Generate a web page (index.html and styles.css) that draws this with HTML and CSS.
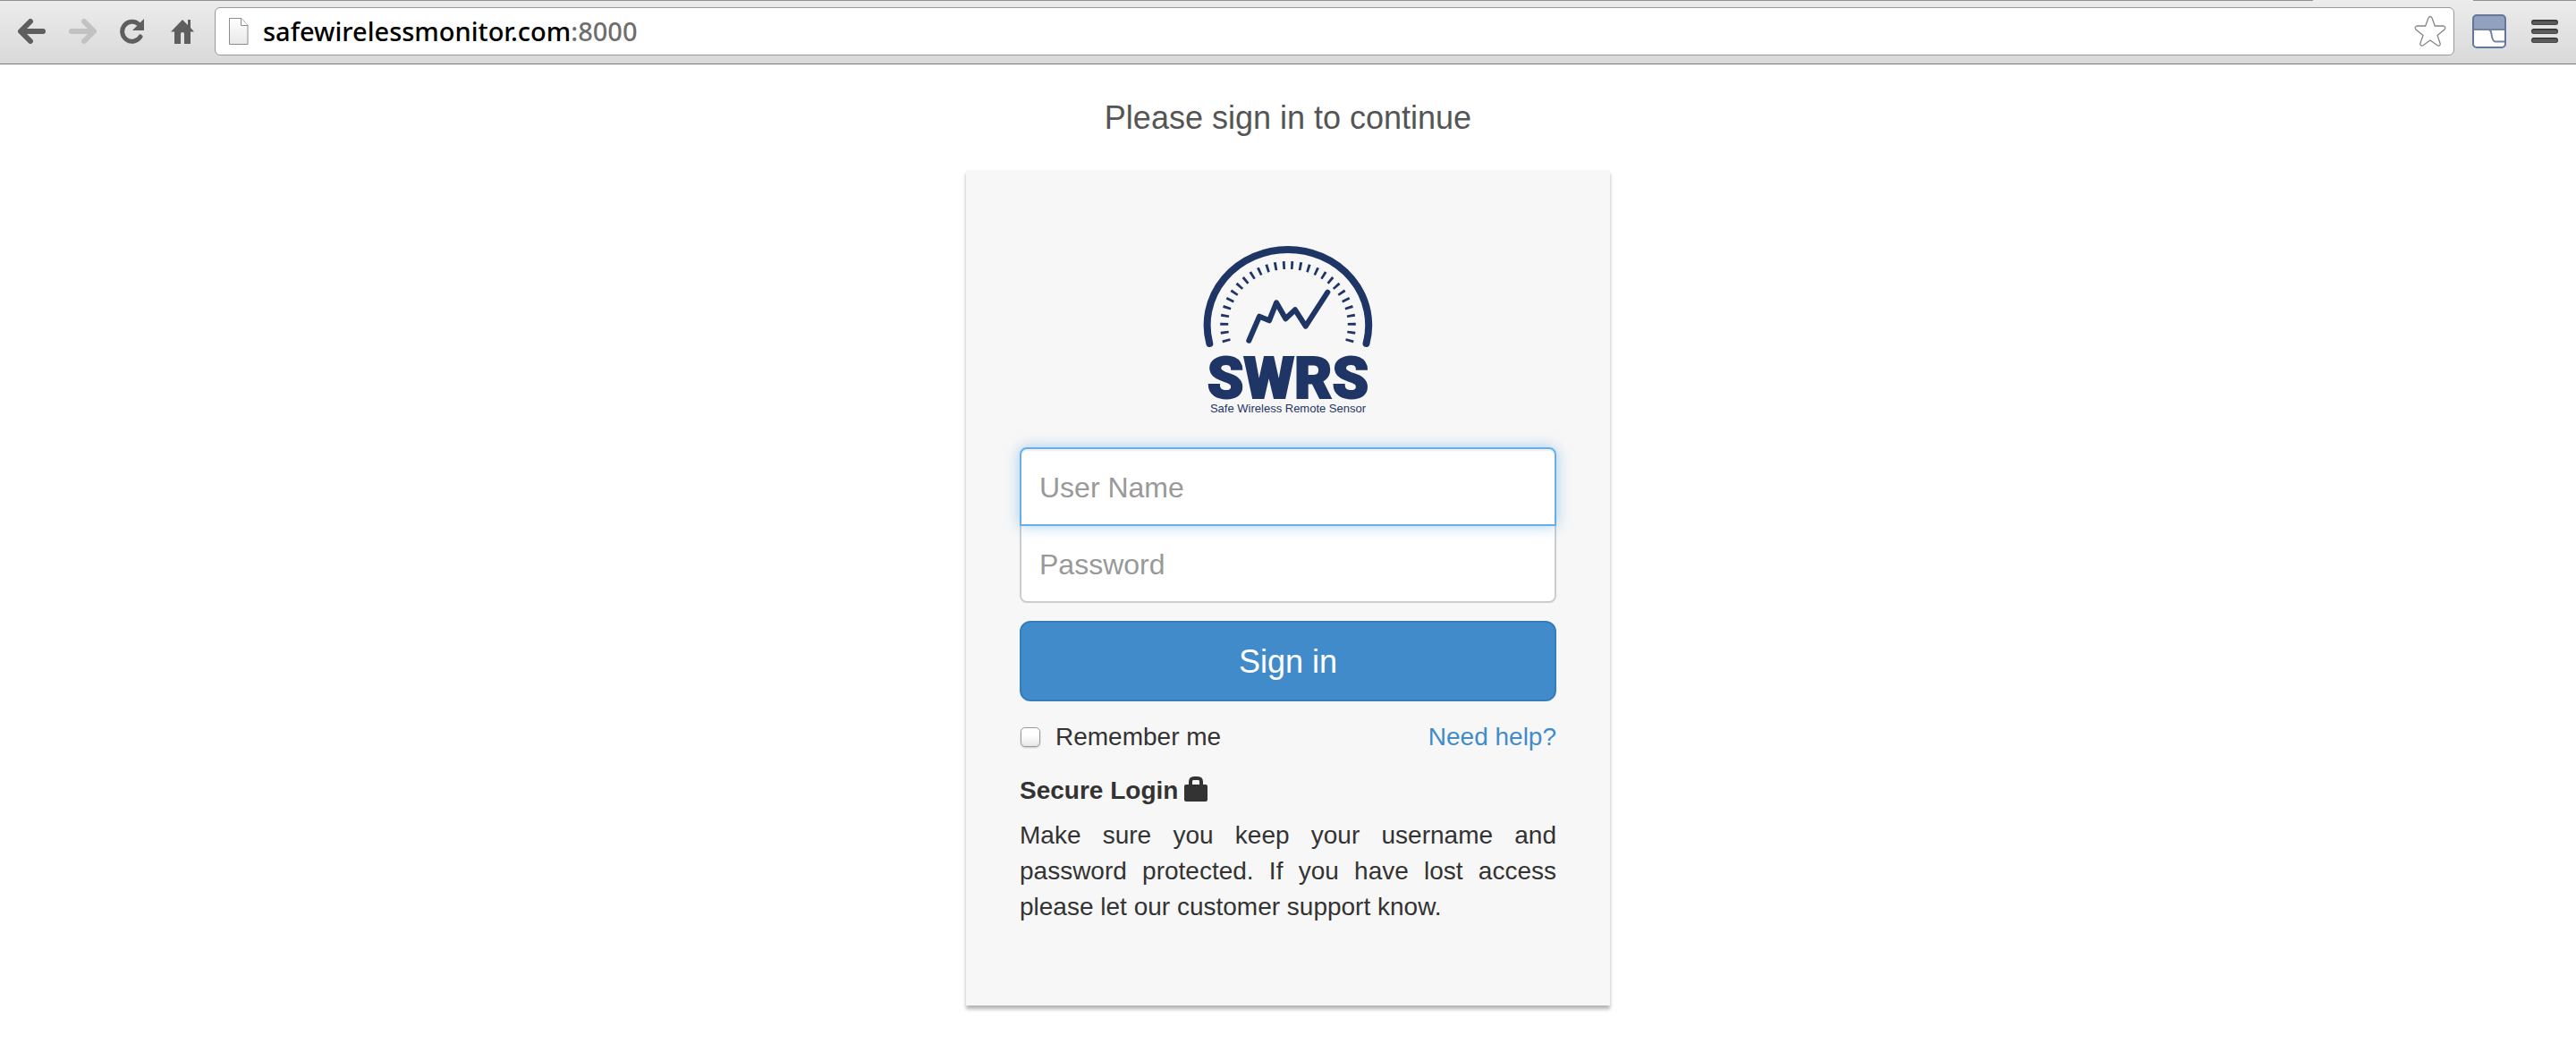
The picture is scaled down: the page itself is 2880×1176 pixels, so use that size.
FILE: index.html
```html
<!DOCTYPE html>
<html lang="en">
<head>
<meta charset="utf-8">
<title>Sign in</title>
<link rel="stylesheet" href="styles.css">
</head>
<body>
<header class="toolbar">
  <div class="tab-edge"></div>
  <nav class="nav">
    <button class="tool" type="button" aria-label="Back">
      <svg viewBox="0 0 32 28" width="32" height="28"><path d="M14 3 3 14l11 11M4 14h24" class="arrow"/></svg>
    </button>
    <button class="tool" type="button" aria-label="Forward" disabled>
      <svg viewBox="0 0 32 28" width="32" height="28"><path d="M18 3l11 11-11 11M28 14H4" class="arrow arrow-off"/></svg>
    </button>
    <button class="tool" type="button" aria-label="Reload">
      <svg viewBox="0 0 32 28" width="32" height="28"><path d="M25 20A11 11 0 1 1 23 6" class="ring"/><path d="M29 0v13H16z" class="solid"/></svg>
    </button>
    <button class="tool" type="button" aria-label="Home">
      <svg viewBox="0 0 32 28" width="32" height="28"><path d="M16 1 22 7V1h3v9l4 4.500h-4V28h-7V17q0-2-2-2t-2 2v11H7V14.500H3z" class="solid"/></svg>
    </button>
  </nav>
  <div class="omnibox">
    <svg class="page-icon" viewBox="0 0 24 32" width="24" height="32"><defs><linearGradient id="sheet" x1="0" y1="0" x2="0" y2="1"><stop offset="0" stop-color="#fff"/><stop offset="1" stop-color="#e8e8e8"/></linearGradient></defs><path d="M1.500 1.500H15l7 8V30.500H1.500z" fill="url(#sheet)" stroke="#8c8c8c"/><path d="M14.500 1.500v8H22" fill="#fff" stroke="#8c8c8c"/></svg>
    <span class="url">safewirelessmonitor.com<span class="port">:8000</span></span>
    <button class="star" type="button" aria-label="Bookmark this page">
      <svg viewBox="0 0 36 36" width="36" height="36"><path d="M16 3Q18 0 20 3L23.300 12H33Q36 13.500 34 16L26 22.500 29.300 32Q29 35 26 33.800L18 28 10 33.800Q7 35 6.700 32L10 22.500 2 16Q0 13.500 3 12h9.700z" fill="none" stroke="#858585" stroke-width="1.300"/></svg>
    </button>
  </div>
  <button class="extension" type="button" aria-label="Extension">
    <svg viewBox="0 0 38 38" width="38" height="38"><rect x="1" y="1" width="36" height="36" rx="4" fill="#fff"/><path d="M1 17V5q0-4 4-4h28q4 0 4 4v12z" fill="#93a1c0"/><path d="M1 17h36M19 17q2 1 2.500 5 1 8 4 8.500H37" fill="none" stroke="#73849f" stroke-width="2"/><rect x="1" y="1" width="36" height="36" rx="4" fill="none" stroke="#64779b" stroke-width="2"/></svg>
  </button>
  <button class="menu" type="button" aria-label="Menu">
    <svg viewBox="0 0 30 26" width="30" height="26"><path d="M3 3h24M3 13h24M3 23h24" stroke="#333" stroke-width="6" stroke-linecap="round"/><path d="M3 3.500h24M3 13.500h24M3 23.500h24" stroke="#5c5c5c" stroke-width="4" stroke-linecap="round"/></svg>
  </button>
</header>
<main class="page">
  <h1 class="title">Please sign in to continue</h1>
  <section class="card">
    <svg class="logo" viewBox="0 0 240 220" width="240" height="220" role="img" aria-label="SWRS, Safe Wireless Remote Sensor">
      <path class="gauge" d="M32.300 124A90.300 84.500 0 1 1 207.500 124"/>
      <path class="ticks" pathLength="273" d="M51.500 122A71.300 67 0 1 1 188.500 122"/>
      <path class="trend" d="M76.300 120.700 88 93.700l11 4.600 8-20 10.300 18L128 86.300l11.700 18.400 24.600-38"/>
      <text class="brand" x="120" y="185">SWRS</text>
      <text class="tagline" x="120" y="201">Safe Wireless Remote Sensor</text>
    </svg>
    <form class="form">
      <input class="field field-user" type="text" placeholder="User Name" aria-label="User Name">
      <input class="field field-pass" type="password" placeholder="Password" aria-label="Password">
      <button class="submit" type="submit">Sign in</button>
      <div class="options">
        <label class="remember"><input class="tick" type="checkbox">Remember me</label>
        <a class="help" href="#help">Need help?</a>
      </div>
    </form>
    <h2 class="secure">Secure Login
      <svg class="lock" viewBox="0 0 26 28" width="26" height="28"><path d="M7 11V6q0-4 4-4h4q4 0 4 4v5" fill="none" stroke="#333" stroke-width="4"/><rect y="9" width="26" height="19" rx="2" fill="#333"/><path d="M9 9V6q0-2 2-2h4q2 0 2 2v3z" fill="#f7f7f7"/></svg>
    </h2>
    <p class="note">Make sure you keep your username and password protected. If you have lost access please let our customer support know.</p>
  </section>
</main>
</body>
</html>
```
FILE: styles.css
```css
* { box-sizing: border-box; }
body {
  margin: 0;
  background: #fff;
  color: #333;
  font: 28px/40px "Liberation Sans", Arial, sans-serif;
}
button { border: 0; padding: 0; background: none; font: inherit; }
svg { display: block; }

/* Browser toolbar */
.toolbar {
  position: relative;
  display: flex;
  align-items: center;
  height: 72px;
  padding: 0 20px 2px 20px;
  background: linear-gradient(#ececec, #d9d9d9);
  border-bottom: 1px solid #777;
}
.tab-edge {
  position: absolute;
  inset: 0 0 auto 0;
  height: 1px;
  background: linear-gradient(#929292, #929292) left / calc(100% - 294px) 1px no-repeat,
              linear-gradient(#929292, #929292) right / 115px 1px no-repeat;
}
.nav { display: flex; gap: 24px; width: 220px; }
.arrow { fill: none; stroke: #5e5e5e; stroke-width: 6; stroke-linecap: round; stroke-linejoin: round; }
.arrow-off { stroke: #c2c2c2; }
.ring { fill: none; stroke: #5e5e5e; stroke-width: 5; stroke-linecap: round; }
.solid { fill: #5e5e5e; }
.omnibox {
  flex: 1;
  display: flex;
  align-items: center;
  height: 54px;
  padding: 0 8px 0 14px;
  background: #fff;
  border: 1px solid #999;
  border-radius: 6px;
}
.url {
  flex: 1;
  padding-left: 15px;
  color: #000;
  font: 500 29px/40px "Noto Sans", "Open Sans", sans-serif;
}
.port { color: #6e6e6e; }
.extension { margin-left: 20px; }
.menu { margin-left: 28px; }

/* Sign-in page */
.page { padding: 40px 20px 50px; }
.title {
  margin: 0 0 38px;
  color: #555;
  font-size: 36px;
  font-weight: 400;
  line-height: 40px;
  text-align: center;
}
.card {
  max-width: 720px;
  margin: 0 auto;
  padding: 70px 60px 90px;
  background: #f7f7f7;
  box-shadow: 0 4px 4px rgba(0, 0, 0, .3);
}
.logo { margin: 0 auto 20px; }
.gauge, .ticks, .trend { fill: none; stroke: #1e3565; }
.gauge { stroke-width: 8; stroke-linecap: round; }
.ticks { stroke-width: 9; stroke-dasharray: 3 7; }
.trend { stroke-width: 6; stroke-linecap: round; stroke-linejoin: round; }
.brand, .tagline { fill: #1e3565; text-anchor: middle; }
.brand {
  font: 900 65px Roboto, sans-serif;
  stroke: #1e3565;
  stroke-width: 2;
}
.tagline { font: 13px "Liberation Sans", Arial, sans-serif; }
.form { display: flex; flex-direction: column; }
.field {
  position: relative;
  width: 100%;
  height: 88px;
  padding: 2px 20px 0;
  background: #fff;
  border: 2px solid #ccc;
  color: #555;
  font: 32px/40px "Liberation Sans", Arial, sans-serif;
}
.field::placeholder { color: #999; opacity: 1; }
.field-user {
  z-index: 1;
  border-color: #66afe9;
  border-radius: 8px 8px 0 0;
  box-shadow: inset 0 2px 2px rgba(0, 0, 0, .08), 0 0 16px rgba(102, 175, 233, .6);
}
.field-pass { margin-top: -2px; border-radius: 0 0 8px 8px; }
.submit {
  height: 90px;
  margin: 20px 0;
  padding-top: 2px;
  background: #428bca;
  border: 2px solid #357ebd;
  border-radius: 12px;
  color: #fff;
  font-size: 36px;
}
.options { display: flex; justify-content: space-between; }
.remember { display: flex; align-items: center; gap: 17px; }
.tick {
  appearance: none;
  width: 22px;
  height: 22px;
  margin: 0 0 0 1px;
  background: linear-gradient(#fff 40%, #e6e6e6);
  border: 1px solid #999;
  border-radius: 5px;
  box-shadow: 0 1px 2px rgba(0, 0, 0, .2);
}
.help { color: #428bca; text-decoration: none; }
.secure {
  display: flex;
  gap: 7px;
  margin: 20px 0 10px;
  font-size: 28px;
  line-height: 40px;
}
.lock { margin-top: 4px; }
.note { margin: 0; text-align: justify; }
```
